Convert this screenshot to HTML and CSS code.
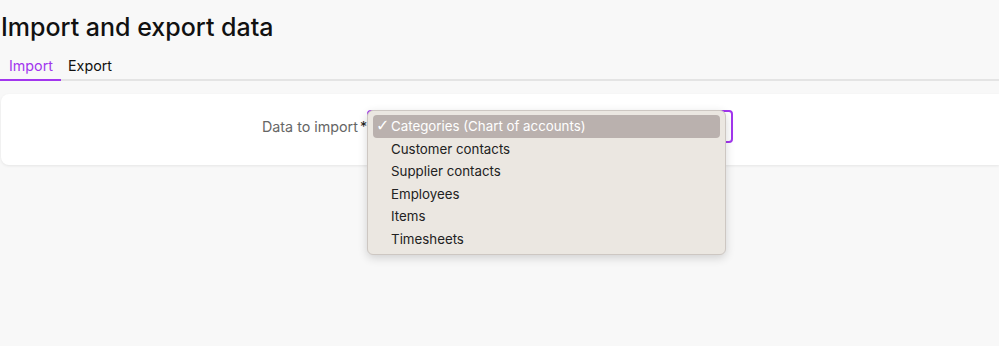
FILE: index.html
```html
<!DOCTYPE html>
<html lang="en">
<head>
    <meta charset="UTF-8">
    <meta name="viewport" content="width=device-width, initial-scale=1.0">
    <title>Import and export data</title>
    <link rel="stylesheet" href="styles.css">
</head>
<body>
    <h1>Import and export data</h1>

    <div class="tabs">
        <div class="tab active">Import</div>
        <div class="tab">Export</div>
    </div>

    <div class="card">
        <div class="row">
            <label class="field-label">Data to import<span class="req">*</span></label>
            <div class="select-wrap">
                <div class="select"></div>
                <!-- open native-style menu -->
                <ul class="menu">
                    <li class="selected"><span class="check">✓</span>Categories (Chart of accounts)</li>
                    <li>Customer contacts</li>
                    <li>Supplier contacts</li>
                    <li>Employees</li>
                    <li>Items</li>
                    <li>Timesheets</li>
                </ul>
            </div>
        </div>
    </div>
</body>
</html>
```

FILE: styles.css
```css
html, body {
    min-height: 100%;
}

body {
    font-family: Inter, "Noto Sans", sans-serif;
    background-color: #f8f8f8;
    margin: 0;
    color: #111;
    min-height: 346px;
}

h1 {
    font-size: 25px;
    font-weight: 500;
    margin: 0;
    padding: 12px 0 0 1px;
    line-height: 30px;
}

.tabs {
    display: flex;
    margin-top: 15px;
    border-bottom: 2px solid #e4e4e4;
}

.tab {
    font-size: 14.3px;
    padding: 0 8px 5px 9px;
    margin-bottom: -2px;
    border-bottom: 2px solid transparent;
}

.tab + .tab {
    padding-left: 7px;
}

.tab.active {
    color: #a236ee;
    border-bottom-color: #a236ee;
}

.card {
    background-color: #ffffff;
    margin: 13px 0 0 1px;
    height: 71px;
    box-sizing: border-box;
    padding: 16px 0 0 261px;
    border-radius: 8px 0 0 8px;
    box-shadow: 0 1px 3px rgba(0, 0, 0, 0.08);
}

.row {
    display: flex;
    align-items: center;
}

.field-label {
    font-size: 14.3px;
    color: #666;
}

.req {
    color: #222;
    margin-left: 2px;
}

.select-wrap {
    position: relative;
    z-index: 5;
}

.select {
    width: 362px;
    height: 29px;
    border: 2px solid #a236ee;
    border-radius: 4px;
    background: #fff;
}

.menu {
    position: absolute;
    left: 0;
    top: 0;
    z-index: 10;
    width: 347px;
    margin: 0;
    padding: 4px 5px 3px;
    list-style: none;
    background-color: #ebe7e1;
    border: 1px solid #cdc7c2;
    border-radius: 6px;
    box-shadow: 0 3px 10px rgba(0, 0, 0, 0.16);
}

.menu li {
    font-size: 13.3px;
    color: #222;
    height: 22.6px;
    line-height: 22px;
    padding-left: 18px;
    border-radius: 4px;
    position: relative;
}

.menu li.selected {
    background-color: #bab1ae;
    color: #fff;
}

.check {
    position: absolute;
    left: 3px;
    font-size: 16px;
    font-family: "DejaVu Sans", sans-serif;
}
```
